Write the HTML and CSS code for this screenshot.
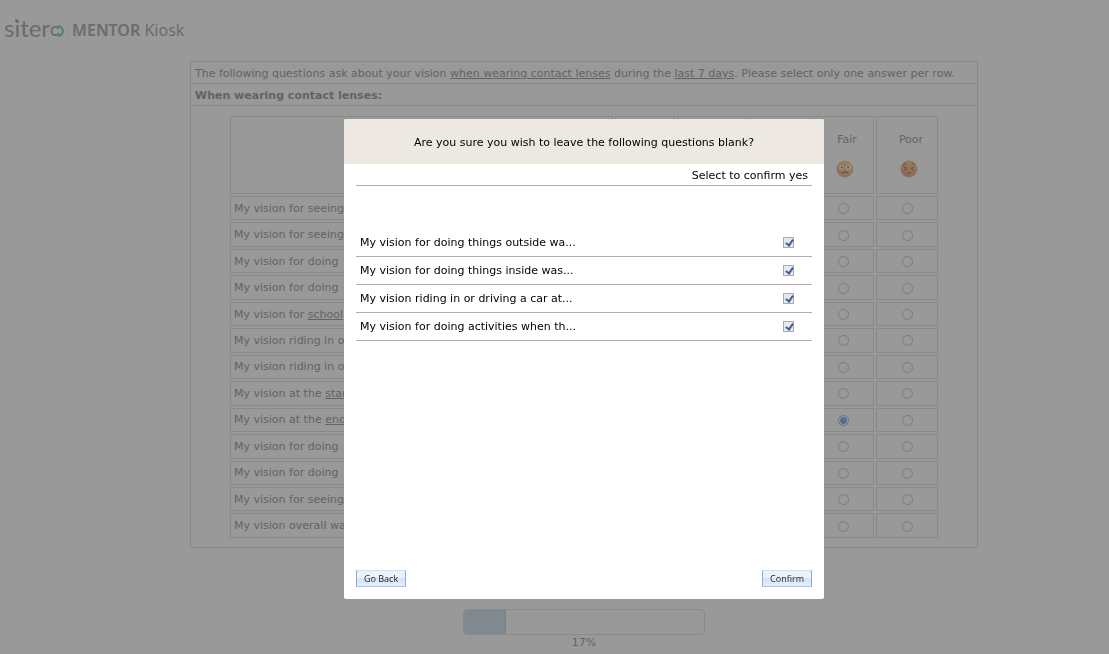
FILE: index.html
```
<!DOCTYPE html>
<html lang="en">
<head>
  <meta charset="utf-8">
  <title>Sitero Mentor Kiosk</title>
  <link rel="stylesheet" href="styles.css">
</head>
<body>
  <header class="brand">
    <span class="logo">siter<svg class="logo-o" width="14" height="12" viewBox="0 0 14 12" fill="none" stroke-width="1.8" stroke-linecap="round" aria-hidden="true">
      <path d="M8.500 3.500C6 .5 1.500 2 1.500 6s4.500 5.500 7 2.500" stroke="#b0b4bb"/>
      <path d="M8.500 1.200C14.300 1.200 14.300 10.800 8.500 10.800" stroke="#7fc4cf"/>
    </svg></span>
    <span class="product"><b>MENTOR</b> Kiosk</span>
  </header>

  <main class="page">
    <section class="panel">
      <p class="intro">The following questions ask about your vision <u>when wearing contact lenses</u> during the <u>last 7 days</u>. Please select only one answer per row.</p>
      <p class="subtitle">When wearing contact lenses:</p>
      <table class="questions">
        <thead>
          <tr>
            <td></td>
            <td class="col-first"></td>
            <td class="col-second"></td>
            <td class="col"></td>
            <th class="col" scope="col">
              <span class="rating">Fair</span>
              <svg class="face" width="18" height="18" viewBox="0 0 18 18" aria-hidden="true">
                <defs>
                  <linearGradient id="fair" x1="1" y1="0" x2="0" y2="1">
                    <stop offset="0" stop-color="#fbdf9c"/>
                    <stop offset="1" stop-color="#f0b097"/>
                  </linearGradient>
                </defs>
                <circle cx="9" cy="9" r="8.5" fill="url(#fair)"/>
                <circle cx="5.5" cy="7.5" r="2.5" fill="#f6f3ee"/>
                <circle cx="12.5" cy="7.5" r="2.5" fill="#f6f3ee"/>
                <circle cx="5.8" cy="7.5" r="1" fill="#8d8794"/>
                <circle cx="12.2" cy="7.5" r="1" fill="#8d8794"/>
                <path d="M5.500 13.500q3.500-3 7 0" fill="none" stroke="#b08a84" stroke-width="1.3"/>
              </svg>
            </th>
            <th class="col" scope="col">
              <span class="rating">Poor</span>
              <svg class="face" width="18" height="18" viewBox="0 0 18 18" aria-hidden="true">
                <defs>
                  <linearGradient id="poor" x1="1" y1="0" x2="0" y2="1">
                    <stop offset="0" stop-color="#fad494"/>
                    <stop offset="1" stop-color="#efa593"/>
                  </linearGradient>
                </defs>
                <circle cx="9" cy="9" r="8.5" fill="url(#poor)"/>
                <path d="M3 5l3-2M15 5l-3-2M4 7l3 1.500-3 1.500M14 7l-3 1.500 3 1.500" fill="none" stroke="#a08890"/>
                <path d="M6 13.500q3-3 6 0z" fill="#b08a84"/>
              </svg>
            </th>
          </tr>
        </thead>
        <tbody id="rows"></tbody>
      </table>
    </section>

    <div class="progress">
      <div class="progress-track"><div class="progress-fill" style="width: 17.5%"></div></div>
      <div>17%</div>
    </div>
  </main>

  <div class="overlay">
    <form class="modal" role="dialog" aria-modal="true" aria-labelledby="modal-title">
      <h1 class="modal-title" id="modal-title">Are you sure you wish to leave the following questions blank?</h1>
      <div class="modal-body">
        <p class="hint">Select to confirm yes</p>
        <ul class="blank-list">
          <li><label for="q1">My vision for doing things outside wa...</label><input type="checkbox" id="q1" checked></li>
          <li><label for="q2">My vision for doing things inside was...</label><input type="checkbox" id="q2" checked></li>
          <li><label for="q3">My vision riding in or driving a car at...</label><input type="checkbox" id="q3" checked></li>
          <li><label for="q4">My vision for doing activities when th...</label><input type="checkbox" id="q4" checked></li>
        </ul>
        <div class="actions">
          <button type="button" class="btn">Go Back</button>
          <button type="button" class="btn">Confirm</button>
        </div>
      </div>
    </form>
  </div>

  <script>
    const questions = [
      'My vision for seeing',
      'My vision for seeing',
      'My vision for doing',
      'My vision for doing',
      'My vision for <u>school</u>',
      'My vision riding in or',
      'My vision riding in or',
      'My vision at the <u>start</u>',
      'My vision at the <u>end</u>',
      'My vision for doing',
      'My vision for doing',
      'My vision for seeing',
      'My vision overall was'
    ];
    // row index -> selected column
    const answers = { 8: 3 };

    const rows = document.getElementById('rows');
    questions.forEach((text, i) => {
      let html = `<th scope="row" id="row${i}">${text}</th>`;
      for (let c = 0; c < 5; c++) {
        html += `<td><input type="radio" name="answer${i}" aria-labelledby="row${i}"${answers[i] === c ? ' checked' : ''}></td>`;
      }
      const tr = document.createElement('tr');
      tr.innerHTML = html;
      rows.appendChild(tr);
    });
  </script>
</body>
</html>
```
FILE: styles.css
```
* {
  box-sizing: border-box;
}
body {
  margin: 0;
  background-color: #fff;
  color: #a6a6a6;
  font-family: Verdana, "DejaVu Sans", sans-serif;
  font-size: 11px;
  line-height: 14px;
}
p, h1, ul {
  margin: 0;
  padding: 0;
}

/* logo */
.brand {
  display: flex;
  align-items: center;
  height: 61px;
  padding-left: 4px;
}
.logo {
  position: relative;
  color: #b0b4bb;
  font-family: Lato, sans-serif;
  font-size: 24px;
  line-height: 24px;
  padding-right: 3px;
  margin-bottom: 6px;
}
.logo::after {
  content: "";
  position: absolute;
  left: 11px;
  top: 3px;
  width: 3px;
  height: 3px;
  border-radius: 50%;
  background-color: #7fc4cf;
}
.product {
  border-left: 1px solid #f4f4f4;
  padding-left: 4px;
  color: #b0b4bb;
  font-family: "Noto Sans", sans-serif;
  font-size: 16px;
  line-height: 16px;
  margin-bottom: 2px;
}
.product b {
  font-weight: 600;
}

/* questionnaire */
.page {
  padding-left: 59px;
}
.panel {
  max-width: 788px;
  margin: 0 auto;
  padding-bottom: 7px;
  border: 1px solid #e4e4e4;
}
.intro, .subtitle {
  padding: 5px 4px 2px;
  border-bottom: 1px solid #e4e4e4;
  white-space: nowrap;
}
.subtitle {
  font-weight: bold;
}
.questions {
  width: 712px;
  height: 426px;
  margin: 8px auto 0;
  border-collapse: separate;
  border-spacing: 2px;
  table-layout: fixed;
}
.questions th, .questions td {
  padding: 1px 3px 0;
  border: 1px solid #e4e4e4;
  font-weight: normal;
  text-align: center;
  white-space: nowrap;
}
.questions tbody th {
  text-align: left;
}
.questions thead tr {
  height: 78px;
}
.questions .col {
  width: 62px;
}
.questions .col-first {
  width: 60px;
}
.questions .col-second {
  width: 69px;
}
.rating {
  display: block;
  padding-left: 8px;
  margin-bottom: 13px;
}
.face {
  display: block;
  margin: 0 auto;
  position: relative;
  left: 2px;
}
input[type="radio"] {
  appearance: none;
  display: block;
  width: 11px;
  height: 11px;
  margin: 0 auto;
  border: 1px solid #d0d0d0;
  border-radius: 50%;
}
input[type="radio"]:checked {
  border-color: #a0c0ec;
  background: radial-gradient(circle, #8cb6f0 3px, #fff 4px);
}

/* progress */
.progress {
  width: 242px;
  margin: 61px auto 0;
  text-align: center;
}
.progress-track {
  height: 26px;
  margin-bottom: 1px;
  border: 1px solid #dde8f2;
  border-radius: 4px;
  overflow: hidden;
}
.progress-fill {
  height: 100%;
  border-right: 1px solid #c5d8e6;
  background-color: #d6e5f0;
}

/* confirm dialog */
.overlay {
  position: fixed;
  inset: 0;
  display: flex;
  justify-content: center;
  align-items: flex-start;
  padding: 119px 0 0 59px;
  background-color: rgba(0, 0, 0, 0.4);
}
.modal {
  display: flex;
  flex-direction: column;
  width: 480px;
  min-height: 480px;
  border-radius: 2px;
  background-color: #fff;
  color: #000;
  overflow: hidden;
}
.modal-title {
  padding: 17px 12px 14px;
  background-color: #ede8e1;
  font-size: 11px;
  font-weight: normal;
  text-align: center;
}
.modal-body {
  flex: 1;
  display: flex;
  flex-direction: column;
  padding: 0 12px 12px;
}
.hint {
  padding: 5px 4px 2px;
  border-bottom: 1px solid #b0b0b0;
  text-align: right;
}
.blank-list {
  margin-top: 43px;
  list-style: none;
}
.blank-list li {
  display: flex;
  align-items: center;
  justify-content: space-between;
  height: 28px;
  padding: 0 18px 0 4px;
  border-bottom: 1px solid #b0b0b0;
}
input[type="checkbox"] {
  appearance: none;
  width: 11px;
  height: 11px;
  margin: 0;
  border: 1px solid #a8abae;
  background: #e6e9ed;
}
input[type="checkbox"]:checked::before {
  content: "";
  display: block;
  width: 3px;
  height: 6px;
  margin: 0 3px;
  border: solid #3f5f9c;
  border-width: 0 2px 2px 0;
  transform: rotate(35deg);
}
.actions {
  display: flex;
  justify-content: space-between;
  margin-top: auto;
}
.btn {
  height: 17px;
  padding: 0 7px;
  border: 0 solid #8fabd0;
  border-width: 0 1px;
  border-radius: 1px;
  box-shadow: inset 0 1px #cfe0f4, inset 0 -1px #a9c4e4;
  background: linear-gradient(#e9f2fd 50%, #d5e4f7 50%, #e6f0fc);
  color: #222;
  font-family: Tahoma, "Open Sans", sans-serif;
  font-size: 9px;
  line-height: 17px;
}
```
